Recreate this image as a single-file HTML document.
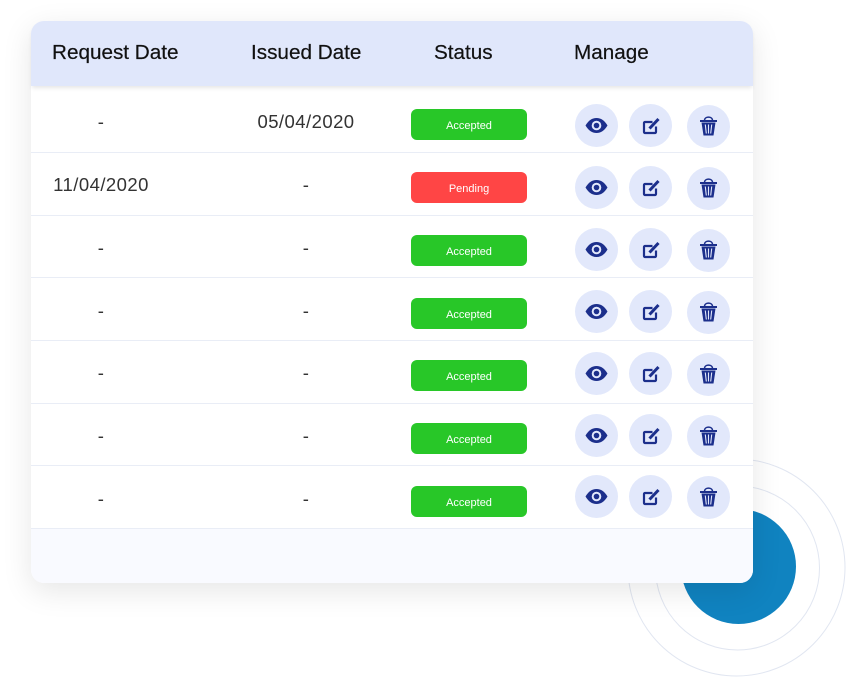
<!DOCTYPE html>
<html><head><meta charset="utf-8">
<style>
html,body{margin:0;padding:0;background:#fff;width:846px;height:677px;overflow:hidden}
body{position:relative;font-family:"Liberation Sans",sans-serif;color:#222}
.abs{position:absolute}
#card{position:absolute;left:31px;top:21px;width:722px;height:562px;background:#fff;border-radius:13px;box-shadow:0 8px 30px rgba(0,0,0,.1)}
#head{position:absolute;left:31px;top:21px;width:722px;height:65px;background:#e0e7fb;border-radius:13px 13px 0 0;box-shadow:0 3px 4px -1px rgba(0,0,0,.1)}
#foot{position:absolute;left:31px;top:529px;width:722px;height:54px;background:#f9faff;border-radius:0 0 13px 13px}
.th{position:absolute;top:40px;font-size:20.7px;line-height:26px;color:#111;white-space:nowrap;-webkit-text-stroke:.2px #111}
.td{position:absolute;font-size:18.5px;line-height:24px;color:#333;white-space:nowrap;text-align:center;letter-spacing:.45px}
.ln{position:absolute;left:31px;width:722px;height:1px;background:#e9edf6}
.b{position:absolute;left:411px;width:116px;height:31px;border-radius:6px;color:#fff;font-size:11px;line-height:34px;text-align:center;background:#28c728}
.b.r{background:#ff4545}
.c{position:absolute;width:43px;height:43px;border-radius:50%;background:#e2e8fb}
svg.i{position:absolute;left:0;top:0;width:43px;height:43px;fill:none;stroke:#1c2f8c}
</style></head><body>
<svg class="abs" style="left:0;top:0" width="846" height="677">
<circle cx="738.500" cy="566.500" r="57.500" fill="#1083c0"/>
<circle cx="737.500" cy="568" r="82" fill="none" stroke="#e1e6f1" stroke-width="1"/>
<circle cx="736.500" cy="567.500" r="108.500" fill="none" stroke="#e1e6f1" stroke-width="1"/>
</svg>
<div id="card"></div>
<div id="foot"></div>
<div id="head"></div>
<div class="th" style="left:52px">Request Date</div>
<div class="th" style="left:251px">Issued Date</div>
<div class="th" style="left:434px">Status</div>
<div class="th" style="left:574px">Manage</div>

<div class="ln" style="top:152px"></div>
<div class="ln" style="top:215px"></div>
<div class="ln" style="top:277px"></div>
<div class="ln" style="top:340px"></div>
<div class="ln" style="top:403px"></div>
<div class="ln" style="top:465px"></div>
<div class="ln" style="top:528px"></div>

<div class="td" style="left:52px;width:98px;top:110px">-</div>
<div class="td" style="left:256px;width:100px;top:110px">05/04/2020</div>
<div class="td" style="left:52px;width:98px;top:173px">11/04/2020</div>
<div class="td" style="left:256px;width:100px;top:173px">-</div>
<div class="td" style="left:52px;width:98px;top:236px">-</div>
<div class="td" style="left:256px;width:100px;top:236px">-</div>
<div class="td" style="left:52px;width:98px;top:299px">-</div>
<div class="td" style="left:256px;width:100px;top:299px">-</div>
<div class="td" style="left:52px;width:98px;top:361px">-</div>
<div class="td" style="left:256px;width:100px;top:361px">-</div>
<div class="td" style="left:52px;width:98px;top:424px">-</div>
<div class="td" style="left:256px;width:100px;top:424px">-</div>
<div class="td" style="left:52px;width:98px;top:487px">-</div>
<div class="td" style="left:256px;width:100px;top:487px">-</div>

<div class="b" style="top:109px">Accepted</div>
<div class="b r" style="top:172px">Pending</div>
<div class="b" style="top:235px">Accepted</div>
<div class="b" style="top:298px">Accepted</div>
<div class="b" style="top:360px">Accepted</div>
<div class="b" style="top:423px">Accepted</div>
<div class="b" style="top:486px">Accepted</div>

<svg width="0" height="0" style="position:absolute">
<defs>
<g id="eye"><path d="M10.500 21.500C13.500 16.500 17 14 21.500 14S29.500 16.500 32.500 21.500C29.500 26.500 26 29 21.500 29S13.500 26.500 10.500 21.500Z" fill="#1c2f8c" stroke="none"/><circle cx="21.500" cy="21.500" r="4.800" fill="#e2e8fb" stroke="none"/><circle cx="21.500" cy="21.500" r="2.800" fill="#1c2f8c" stroke="none"/></g>
<g id="edit"><path d="M23.500 18H16a1 1 0 0 0-1 1V28a1 1 0 0 0 1 1H26a1 1 0 0 0 1-1V22.500" stroke-width="2.200"/><path d="M20.500 24.500L29.500 15" stroke-width="3"/></g>
<g id="trash"><path d="M13 16H30" stroke-width="2"/><path d="M17.500 15.500C17.500 11 25.500 11 25.500 15.500" stroke-width="1.500"/><path d="M14.500 17.500L16.500 30.500H26.500L28.500 17.500Z" fill="#1c2f8c" stroke="none"/><path d="M18.300 19.500L19.300 28.500M21.500 19.500V28.500M24.700 19.500L23.700 28.500" stroke="#e2e8fb" stroke-width="1.100"/></g>
</defs>
</svg>

<div class="c" style="left:575px;top:104px"><svg class="i"><use href="#eye"/></svg></div>
<div class="c" style="left:629px;top:104px"><svg class="i"><use href="#edit"/></svg></div>
<div class="c" style="left:687px;top:105px"><svg class="i"><use href="#trash"/></svg></div>

<div class="c" style="left:575px;top:166px"><svg class="i"><use href="#eye"/></svg></div>
<div class="c" style="left:629px;top:166px"><svg class="i"><use href="#edit"/></svg></div>
<div class="c" style="left:687px;top:167px"><svg class="i"><use href="#trash"/></svg></div>

<div class="c" style="left:575px;top:228px"><svg class="i"><use href="#eye"/></svg></div>
<div class="c" style="left:629px;top:228px"><svg class="i"><use href="#edit"/></svg></div>
<div class="c" style="left:687px;top:229px"><svg class="i"><use href="#trash"/></svg></div>

<div class="c" style="left:575px;top:290px"><svg class="i"><use href="#eye"/></svg></div>
<div class="c" style="left:629px;top:290px"><svg class="i"><use href="#edit"/></svg></div>
<div class="c" style="left:687px;top:291px"><svg class="i"><use href="#trash"/></svg></div>

<div class="c" style="left:575px;top:352px"><svg class="i"><use href="#eye"/></svg></div>
<div class="c" style="left:629px;top:352px"><svg class="i"><use href="#edit"/></svg></div>
<div class="c" style="left:687px;top:353px"><svg class="i"><use href="#trash"/></svg></div>

<div class="c" style="left:575px;top:414px"><svg class="i"><use href="#eye"/></svg></div>
<div class="c" style="left:629px;top:414px"><svg class="i"><use href="#edit"/></svg></div>
<div class="c" style="left:687px;top:415px"><svg class="i"><use href="#trash"/></svg></div>

<div class="c" style="left:575px;top:475px"><svg class="i"><use href="#eye"/></svg></div>
<div class="c" style="left:629px;top:475px"><svg class="i"><use href="#edit"/></svg></div>
<div class="c" style="left:687px;top:476px"><svg class="i"><use href="#trash"/></svg></div>
</body></html>
